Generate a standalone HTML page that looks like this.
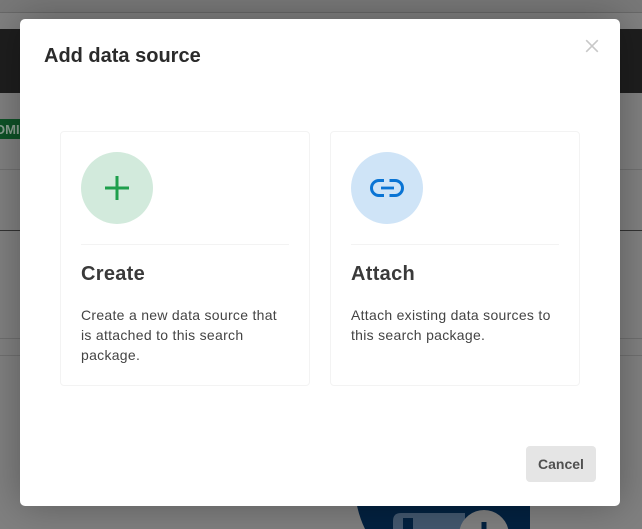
<!DOCTYPE html>
<html><head><meta charset="utf-8"><style>
html,body{margin:0;padding:0;width:642px;height:529px;overflow:hidden;background:#808080}
body{font-family:"Liberation Sans",sans-serif}
#r{position:absolute;left:0;top:0;width:642px;height:529px;overflow:hidden}
#r div,#r svg{position:absolute;display:block}
.t{white-space:nowrap}
</style></head><body><div id="r">
<div style="left:0;top:0;width:642px;height:12px;background:#787878"></div>
<div style="left:0;top:12px;width:642px;height:1px;background:#686868"></div>
<div style="left:0;top:29px;width:642px;height:64px;background:#1e1e1e"></div>
<div style="left:0;top:119px;width:20px;height:20px;background:#0e5227"></div>
<div class="t" style="left:-5px;top:122px;font-size:13px;line-height:15px;font-weight:700;color:#8a9f91">OMI</div>
<div style="left:0;top:169px;width:642px;height:1px;background:#707070"></div>
<div style="left:0;top:230px;width:642px;height:1px;background:#333"></div>
<div style="left:0;top:338px;width:642px;height:1px;background:#6f6f6f"></div>
<div style="left:0;top:355px;width:642px;height:1px;background:#707070"></div>
<svg style="left:340px;top:495px" width="200" height="34" viewBox="0 0 200 34">
<path d="M15 0H190V34H25Q18 20 15 0Z" fill="#032241"/>
<path d="M53 34V26Q53 18 61 18H125V34Z" fill="#43586f"/>
<rect x="63" y="23" width="10" height="11" fill="#032241"/>
<path d="M119.730 34A25 25 0 0 1 168.270 34Z" fill="#808080"/>
<rect x="141.500" y="27" width="5" height="7" fill="#032241"/>
</svg>
<div style="left:20px;top:19px;width:600px;height:487px;background:#fff;border-radius:5px;box-shadow:0 0 40px rgba(0,0,0,.3)"></div>
<div class="t" style="left:44px;top:43px;font-size:20px;line-height:26px;font-weight:700;color:#2b2b2b">Add data source</div>
<svg style="left:585px;top:39px" width="14" height="14" viewBox="0 0 14 14"><path d="M1.200 1.200L12.800 12.800M12.800 1.200L1.200 12.800" stroke="#c8c8c8" stroke-width="1.600" fill="none"/></svg>

<div style="left:60px;top:131px;width:248px;height:253px;border:1px solid #f3f3f3;border-radius:4px"></div>
<div style="left:81px;top:152px;width:72px;height:72px;border-radius:50%;background:#d2eadc"></div>
<svg style="left:105px;top:176px" width="24" height="24" viewBox="0 0 24 24"><path d="M12 0V24M0 12H24" stroke="#1e9f4c" stroke-width="3" fill="none"/></svg>
<div style="left:81px;top:244px;width:208px;height:1px;background:#f3f3f3"></div>
<div class="t" style="left:81px;top:261px;font-size:20px;line-height:26px;font-weight:700;color:#3a3a3a;letter-spacing:.3px">Create</div>
<div class="t" style="left:81px;top:305px;font-size:14px;line-height:20px;color:#444;letter-spacing:.29px">Create a new data source that<br>is attached to this search<br>package.</div>

<div style="left:330px;top:131px;width:248px;height:253px;border:1px solid #f3f3f3;border-radius:4px"></div>
<div style="left:351px;top:152px;width:72px;height:72px;border-radius:50%;background:#cfe4f7"></div>
<svg style="left:370px;top:178px" width="34" height="20" viewBox="0 0 34 20"><path d="M14 2.500H9A7.500 7.500 0 0 0 9 17.500H14M19.500 2.500H25A7.500 7.500 0 0 1 25 17.500H19.500" stroke="#0a74d4" stroke-width="3" fill="none"/><path d="M11 10H24" stroke="#0a74d4" stroke-width="2.800" fill="none"/></svg>
<div style="left:351px;top:244px;width:208px;height:1px;background:#f3f3f3"></div>
<div class="t" style="left:351px;top:261px;font-size:20px;line-height:26px;font-weight:700;color:#3a3a3a;letter-spacing:.3px">Attach</div>
<div class="t" style="left:351px;top:305px;font-size:14px;line-height:20px;color:#444;letter-spacing:.29px">Attach existing data sources to<br>this search package.</div>

<div style="left:526px;top:446px;width:70px;height:36px;background:#e5e5e5;border-radius:4px"></div>
<div class="t" style="left:526px;top:455px;width:70px;text-align:center;font-size:14px;line-height:18px;font-weight:700;color:#505050">Cancel</div>
</div></body></html>
